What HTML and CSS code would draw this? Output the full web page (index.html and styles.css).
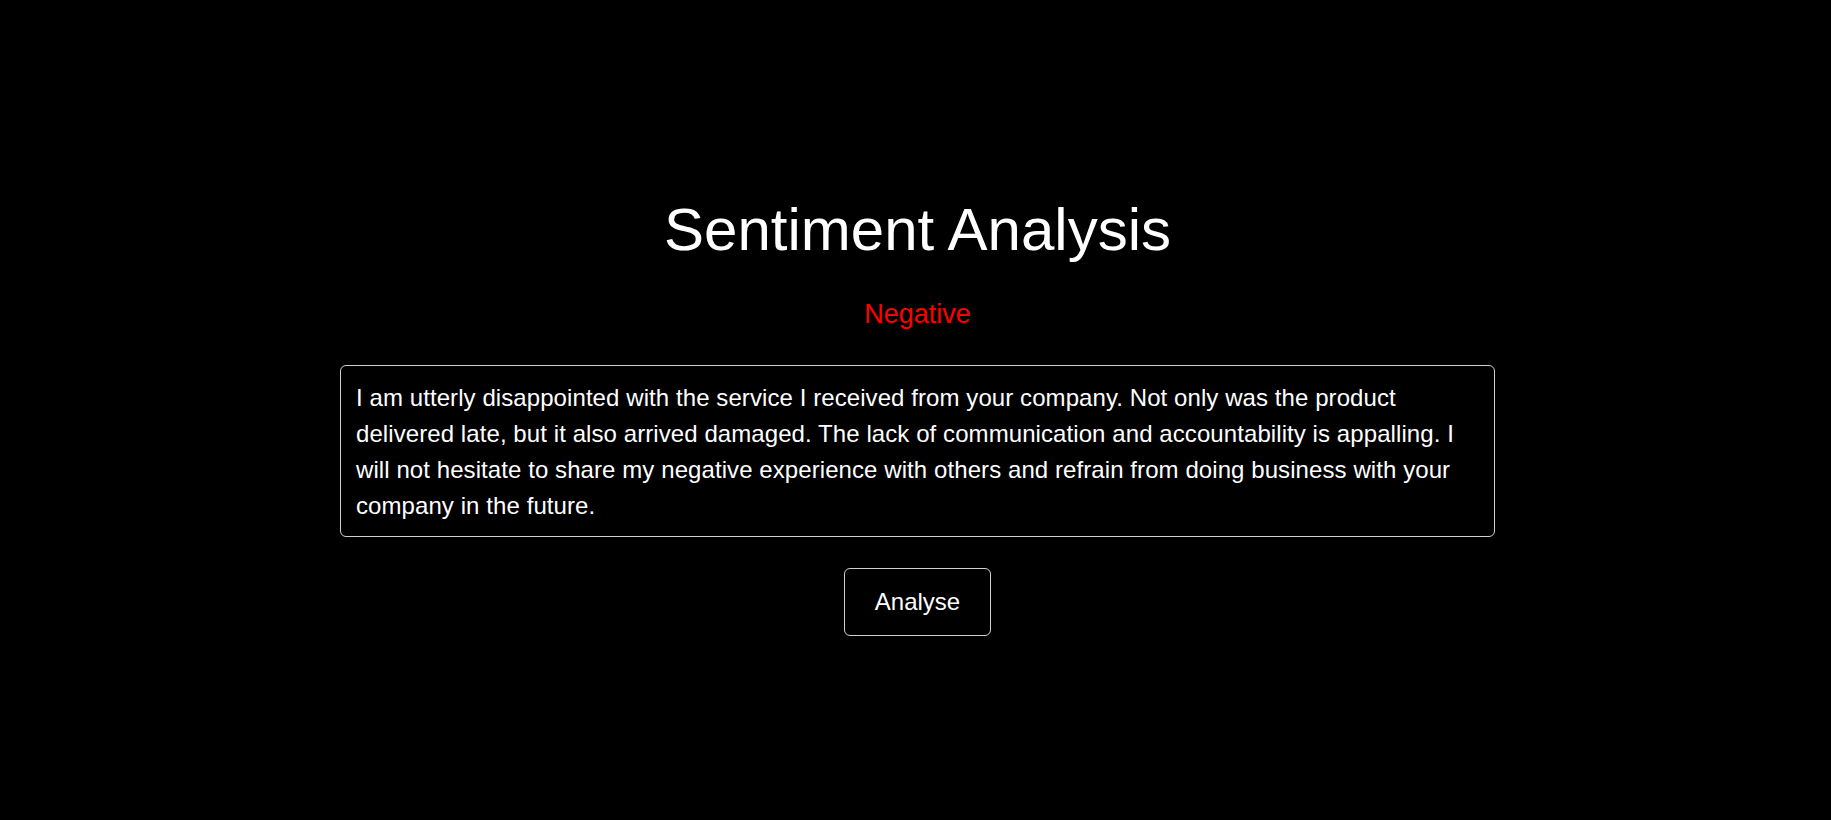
FILE: index.html
```html
<!DOCTYPE html>
<html lang="en">
<head>
<meta charset="utf-8">
<title>Sentiment Analysis</title>
<link rel="stylesheet" href="styles.css">
</head>
<body>
<main class="app">
  <h1 class="title">Sentiment Analysis</h1>
  <p class="result">Negative</p>
  <textarea class="input" spellcheck="false">I am utterly disappointed with the service I received from your company. Not only was the product delivered late, but it also arrived damaged. The lack of communication and accountability is appalling. I will not hesitate to share my negative experience with others and refrain from doing business with your company in the future.</textarea>
  <button class="analyse" type="button">Analyse</button>
</main>
</body>
</html>
```

FILE: styles.css
```css
html, body {
  margin: 0;
  background: #000;
}

body {
  padding-left: 4px;
  font-family: "Liberation Sans", Arial, sans-serif;
  color: #fff;
}

.app {
  display: flex;
  flex-direction: column;
  align-items: center;
  padding-top: 195px;
}

.title {
  margin: 0;
  font-size: 60px;
  line-height: 69px;
  font-weight: 400;
  color: #fff;
}

.result {
  margin: 35px 0 0;
  font-size: 27px;
  line-height: 31px;
  color: #ff0000;
}

.input {
  box-sizing: border-box;
  margin: 35px 0 0;
  width: 1155px;
  height: 172px;
  padding: 14px 15px;
  border: 1px solid #d0d0d0;
  border-radius: 6px;
  background: #000;
  color: #fff;
  font-family: "Liberation Sans", Arial, sans-serif;
  font-size: 24px;
  line-height: 36px;
  letter-spacing: 0.08px;
  resize: none;
  overflow: hidden;
  outline: none;
}

.analyse {
  box-sizing: border-box;
  margin-top: 31px;
  width: 147px;
  height: 68px;
  padding: 0;
  border: 1px solid #d0d0d0;
  border-radius: 6px;
  background: #000;
  color: #fff;
  font-family: "Liberation Sans", Arial, sans-serif;
  font-size: 24px;
  cursor: pointer;
}
```
